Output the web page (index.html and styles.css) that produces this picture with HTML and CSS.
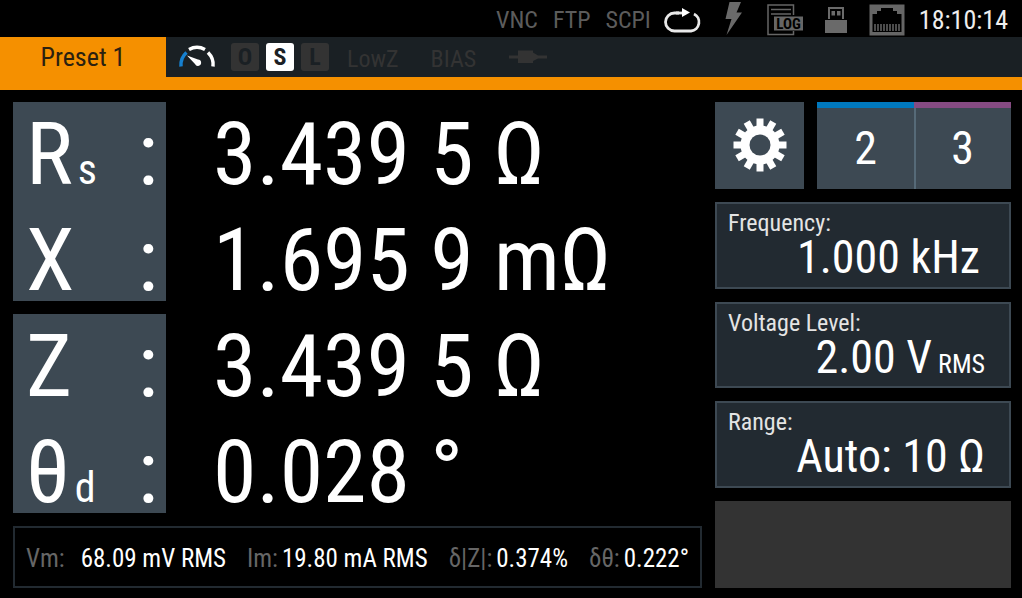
FILE: index.html
```html
<!DOCTYPE html>
<html lang="en">
<head>
  <meta charset="UTF-8">
  <meta name="viewport" content="width=device-width, initial-scale=1.0">
  <title>LCR Meter</title>
  <link rel="stylesheet" href="styles.css">
</head>
<body>
  <header class="status-bar">
    <div class="remote">
      <span>VNC</span>
      <span>FTP</span>
      <span>SCPI</span>
    </div>
    <div class="status-icons">
      <!-- continuous trigger -->
      <svg width="38" height="36" viewBox="0 0 38 36" fill="none" stroke="#e8e8e8" stroke-width="2.800">
        <path d="M15 12H10.500A9 9 0 0 0 10.500 30H27A9 9 0 0 0 30 13"/>
        <path d="M12 12H20"/>
        <path d="M18 7L26 11.500L18 16Z" fill="#fff" stroke="none"/>
      </svg>
      <!-- bolt -->
      <svg width="38" height="36" viewBox="0 0 38 36">
        <path d="M14.500 1H26L21.500 11.500H27L11.500 34L16.500 18H10.500Z" fill="#6a6a6a"/>
      </svg>
      <!-- log -->
      <svg width="38" height="36" viewBox="0 0 38 36">
        <path d="M27.500 14V4H2V33.500H27.500V30" fill="none" stroke="#666" stroke-width="1.500"/>
        <path d="M5 8.500H25M5 13H25" stroke="#666" stroke-width="1.500"/>
        <rect x="8" y="15.500" width="29" height="14" fill="#666"/>
        <text x="22.500" y="28" text-anchor="middle" class="log-text">LOG</text>
      </svg>
      <!-- usb -->
      <svg width="38" height="36" viewBox="0 0 38 36" fill="#6a6a6a">
        <path fill-rule="evenodd" d="M11 6H27V18H11ZM13 8V18H25V8Z"/>
        <path d="M14.500 10H18V14.500H14.500ZM20 10H23.500V14.500H20ZM8 19H30V32H8Z"/>
      </svg>
      <!-- lan -->
      <svg width="38" height="36" viewBox="0 0 38 36">
        <rect x="1.500" y="3.500" width="35" height="31" fill="#666"/>
        <path d="M4.500 31V13H9V10H13V7H25V10H29V13H33.500V31Z" fill="#000"/>
        <path d="M7 23V30M10 23V30M13 23V30M16 23V30M19 23V30M22 23V30M25 23V30M28 23V30M31 23V30" stroke="#666" stroke-width="1.500"/>
      </svg>
    </div>
    <time class="clock">18:10:14</time>
  </header>

  <nav class="tab-bar">
    <button class="tab">Preset 1</button>
    <div class="indicators">
      <svg width="40" height="28" viewBox="0 0 40 28" fill="none" stroke-width="3.500">
        <path d="M4 23.500C3.500 17.500 5.500 13 9.500 9.500" stroke="#1680d0"/>
        <path d="M12 6.500C17 3.800 23 3.800 28 6.500M31 9.500C35 13.500 36.800 17.500 36 23.500" stroke="#fff"/>
        <path d="M10 12.500L21 16.500A3.200 3.200 0 1 1 18 21Z" fill="#fff"/>
      </svg>
      <div class="corrections">
        <span class="flag">O</span>
        <span class="flag on">S</span>
        <span class="flag">L</span>
      </div>
      <span class="option">LowZ</span>
      <span class="option">BIAS</span>
      <svg width="40" height="28" viewBox="0 0 40 28" fill="#333">
        <path d="M1 12.500H10V7.500H25V9.500L30 12.500H39V15.500H30L25 18V20H10V15.500H1Z"/>
      </svg>
    </div>
  </nav>

  <main>
    <div class="measure">
      <section class="group">
        <div class="names">
          <div class="row"><span>R<small>s</small></span><span>:</span></div>
          <div class="row"><span>X</span><span>:</span></div>
        </div>
        <div class="values">
          <div class="row">3.439 5 Ω</div>
          <div class="row">1.695 9 mΩ</div>
        </div>
      </section>
      <section class="group">
        <div class="names">
          <div class="row"><span>Z</span><span>:</span></div>
          <div class="row"><span>θ<small>d</small></span><span>:</span></div>
        </div>
        <div class="values">
          <div class="row">3.439 5 Ω</div>
          <div class="row">0.028 °</div>
        </div>
      </section>
      <section class="monitor">
        <div><span class="key wide">Vm:</span>68.09 mV RMS</div>
        <div><span class="key">Im:</span>19.80 mA RMS</div>
        <div><span class="key">δ|Z|:</span>0.374%</div>
        <div><span class="key">δθ:</span>0.222°</div>
      </section>
    </div>

    <aside class="side">
      <div class="top-buttons">
        <button class="settings" aria-label="Settings">
          <svg width="54" height="54" viewBox="-27 -27 54 54">
            <g stroke="#fff" stroke-width="7">
              <path d="M0 -26.500V26.500"/>
              <path d="M0 -26.500V26.500" transform="rotate(30)"/>
              <path d="M0 -26.500V26.500" transform="rotate(60)"/>
              <path d="M0 -26.500V26.500" transform="rotate(90)"/>
              <path d="M0 -26.500V26.500" transform="rotate(120)"/>
              <path d="M0 -26.500V26.500" transform="rotate(150)"/>
            </g>
            <circle r="19.500" fill="#fff"/>
            <circle r="10.500" fill="#3d4953"/>
          </svg>
        </button>
        <div class="presets">
          <button class="preset blue">2</button>
          <button class="preset purple">3</button>
        </div>
      </div>
      <button class="param">
        <span class="param-name">Frequency:</span>
        <span class="param-value indent">1.000 kHz</span>
      </button>
      <button class="param">
        <span class="param-name">Voltage Level:</span>
        <span class="param-value">2.00 V<small>RMS</small></span>
      </button>
      <button class="param">
        <span class="param-name">Range:</span>
        <span class="param-value">Auto: 10 Ω</span>
      </button>
      <div class="blank"></div>
    </aside>
  </main>
</body>
</html>
```

FILE: styles.css
```css
:root {
  --orange: #f59000;
  --panel: #3d4953;
  --dark: #222a31;
  --strip: #1a2024;
  --off: #333;
}
* {
  box-sizing: border-box;
}
body {
  margin: 0;
  min-height: 100vh;
  display: flex;
  flex-direction: column;
  background: #000;
  color: #fff;
  font-family: "Roboto Condensed", Roboto, sans-serif;
  font-size: 26px;
}
button {
  font: inherit;
  color: inherit;
  border: none;
  padding: 0;
  cursor: pointer;
}
svg {
  display: block;
}

/* status bar */
.status-bar {
  display: flex;
  justify-content: flex-end;
  align-items: center;
  gap: 13px;
  height: 37px;
  padding-right: 14px;
}
.remote {
  display: flex;
  gap: 15px;
  color: #5c5c5c;
  font-size: 24px;
  line-height: 32px;
  padding-top: 3px;
}
.status-icons {
  display: flex;
  gap: 13px;
}
.log-text {
  font-size: 15px;
  font-weight: bold;
  fill: #000;
}
.clock {
  color: #eee;
  line-height: 32px;
  padding-top: 3px;
}

/* preset tabs */
.tab-bar {
  display: flex;
  height: 53px;
  background: var(--strip);
  border-bottom: 13px solid var(--orange);
}
.tab {
  width: 166px;
  background: var(--orange);
  color: #2b2110;
}
.indicators {
  display: flex;
  align-items: center;
  padding-left: 11px;
  color: var(--off);
}
.corrections {
  display: flex;
  gap: 7px;
  margin: 0 18px 0 14px;
}
.flag {
  width: 28px;
  height: 28px;
  border-radius: 3px;
  background: var(--off);
  color: var(--strip);
  font-size: 24px;
  font-weight: bold;
  line-height: 29px;
  text-align: center;
}
.flag.on {
  background: #fff;
}
.option {
  margin-right: 32px;
  padding-top: 3px;
  font-size: 24px;
}

/* page body */
main {
  flex: 1;
  display: grid;
  grid-template-columns: 1fr 296px;
  gap: 13px;
  padding: 12px 11px 10px 13px;
}
.measure {
  display: flex;
  flex-direction: column;
  gap: 13px;
}
.group {
  display: flex;
  font-size: 88px;
  line-height: 82px;
  white-space: nowrap;
}
.names {
  width: 153px;
  padding: 0 8px 0 13px;
  background: var(--panel);
}
.names .row {
  display: flex;
  justify-content: space-between;
}
.names small {
  margin-left: 5px;
  font-size: 42px;
  line-height: 42px;
}
.values {
  padding-left: 47px;
}
.row {
  padding-top: 11px;
}
.row + .row {
  margin-top: 13px;
}
.monitor {
  flex: 1;
  display: flex;
  justify-content: space-between;
  align-items: center;
  padding: 2px 11px 0;
  border: 2px solid var(--dark);
  font-size: 25px;
  white-space: nowrap;
}
.key {
  margin-right: 4px;
  color: #666;
}
.key.wide {
  margin-right: 16px;
}

/* right column */
.side {
  display: grid;
  grid-template-rows: repeat(5, 1fr);
  gap: 13px;
}
.top-buttons {
  display: flex;
  gap: 13px;
}
.settings {
  display: flex;
  justify-content: center;
  align-items: center;
  width: 89px;
  background: var(--panel);
}
.presets {
  flex: 1;
  display: flex;
}
.preset {
  flex: 1;
  background: var(--panel);
  border-top: 6px solid;
  font-size: 46px;
}
.preset.blue {
  border-top-color: #0078bd;
}
.preset.purple {
  border-top-color: #864b82;
  box-shadow: inset 2px 0 #566a78;
}
.param {
  display: flex;
  flex-direction: column;
  padding: 6px 24px 0 11px;
  background: var(--dark);
  border: 2px solid var(--panel);
}
.param-name {
  align-self: flex-start;
  color: #e4e4e4;
  font-size: 24px;
  line-height: 26px;
}
.param-value {
  align-self: flex-end;
  font-size: 46px;
  line-height: 42px;
}
.param-value.indent {
  padding-right: 5px;
}
.param-value small {
  margin-left: 6px;
  font-size: 26px;
}
.blank {
  background: var(--off);
}
```
